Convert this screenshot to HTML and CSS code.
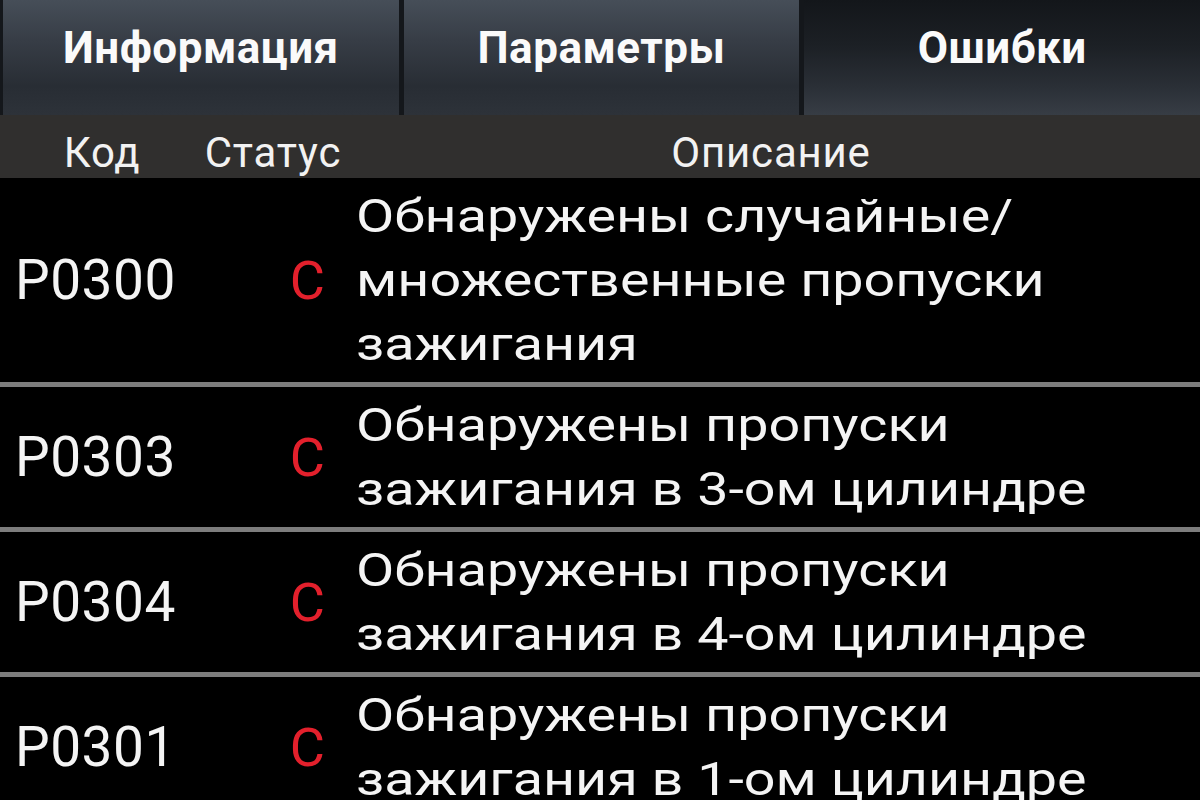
FILE: index.html
```html
<!DOCTYPE html>
<html lang="ru">
<head>
<meta charset="utf-8">
<title>Ошибки</title>
<link rel="stylesheet" href="styles.css">
</head>
<body>
<div class="screen">
  <nav class="tabs">
    <div class="tab">Информация</div>
    <div class="tab">Параметры</div>
    <div class="tab tab-active">Ошибки</div>
  </nav>
  <div class="thead">
    <div class="th th-code">Код</div>
    <div class="th th-status">Статус</div>
    <div class="th th-desc">Описание</div>
  </div>
  <div class="rows">
    <div class="row">
      <div class="code">P0300</div>
      <div class="status">C</div>
      <div class="desc"><span class="desc-text">Обнаружены случайные/<br>множественные пропуски<br>зажигания</span></div>
    </div>
    <div class="row">
      <div class="code">P0303</div>
      <div class="status">C</div>
      <div class="desc"><span class="desc-text">Обнаружены пропуски<br>зажигания в 3-ом цилиндре</span></div>
    </div>
    <div class="row">
      <div class="code">P0304</div>
      <div class="status">C</div>
      <div class="desc"><span class="desc-text">Обнаружены пропуски<br>зажигания в 4-ом цилиндре</span></div>
    </div>
    <div class="row">
      <div class="code">P0301</div>
      <div class="status">C</div>
      <div class="desc"><span class="desc-text">Обнаружены пропуски<br>зажигания в 1-ом цилиндре</span></div>
    </div>
  </div>
</div>
</body>
</html>
```
FILE: styles.css
```css
* { box-sizing: border-box; }
html, body {
  margin: 0;
  padding: 0;
  background: #000;
  overflow: hidden;
}
body {
  font-family: Roboto, "Noto Sans", "DejaVu Sans", sans-serif;
  color: #f4f4f4;
}
.screen {
  width: 1200px;
  height: 800px;
  overflow: hidden;
  background: #000;
}
.tabs {
  display: grid;
  grid-template-columns: 1fr 1fr 1fr;
  gap: 5px;
  height: 115px;
  padding-left: 3px;
  background: #14171b;
}
.tab {
  height: 115px;
  padding-top: 26px;
  text-align: center;
  font-weight: 700;
  font-size: 44px;
  line-height: 44px;
  letter-spacing: 0.5px;
  color: #fafafa;
  background: linear-gradient(to bottom, #464e58 0%, #373d46 35%, #282d34 75%, #2d3239 100%);
}
.tab-active {
  background: linear-gradient(to bottom, #13161a 0%, #1c2025 40%, #2a2f36 75%, #373d45 100%);
}
.thead {
  display: flex;
  height: 63px;
  background: #302f2e;
  font-size: 42px;
  line-height: 49px;
  letter-spacing: 0.8px;
  padding-top: 13px;
  color: #f2f2f2;
}
.th { text-align: center; }
.th-code { width: 204px; }
.th-status { width: 138px; }
.th-desc { flex: 1; }
.row {
  display: flex;
  align-items: center;
  padding: 6px 0;
  border-bottom: 5px solid #7d7d7d;
  min-height: 145px;
}
.code {
  width: 200px;
  padding-left: 15px;
  font-size: 55px;
  letter-spacing: 0.5px;
}
.status {
  width: 145px;
  padding-right: 20px;
  text-align: right;
  font-size: 54px;
  color: #e3202c;
}
.desc {
  flex: 1;
  padding-left: 11px;
  font-size: 46px;
  line-height: 64px;
}
.desc-text {
  display: inline-block;
  white-space: nowrap;
  transform: scaleX(1.21);
  transform-origin: left center;
}
```
